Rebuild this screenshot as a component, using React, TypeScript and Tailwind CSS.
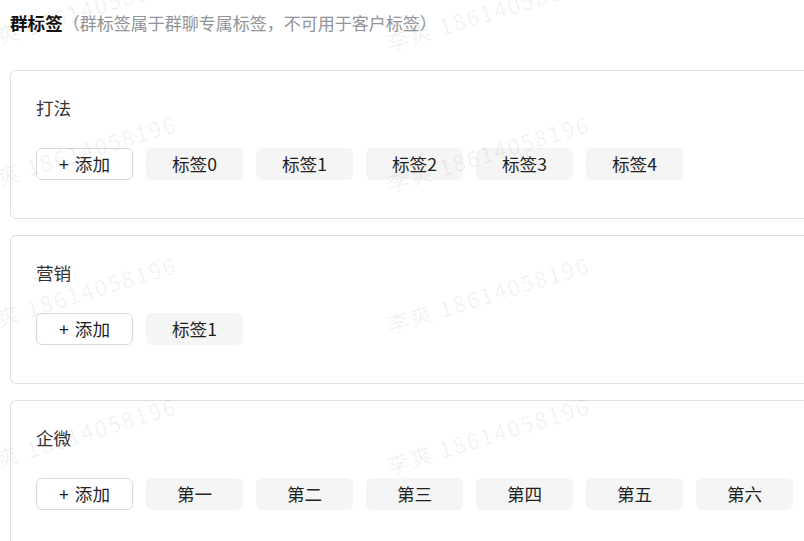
import React from "react";

const groups = [
  { name: "打法", tags: ["标签0", "标签1", "标签2", "标签3", "标签4"] },
  { name: "营销", tags: ["标签1"] },
  { name: "企微", tags: ["第一", "第二", "第三", "第四", "第五", "第六"] },
];

const marks: { left: number; top: number }[] = [];
for (let r = 0; r < 4; r++) {
  for (let c = 0; c < 2; c++) {
    marks.push({ left: -23 + 413 * c, top: 52 + 141 * r - 21 });
  }
}

export default function App() {
  return (
    <div
      className="relative h-[541px] w-[804px] overflow-hidden bg-white"
      style={{ fontFamily: '"Noto Sans CJK SC", "Noto Sans", sans-serif' }}
    >
      <div className="pl-[10px] pt-[10px]">
        <div className="flex h-[26px] items-baseline leading-[26px] whitespace-nowrap">
          <span className="text-[17.6px] font-bold text-[#111]">群标签</span>
          <span className="text-[17px] text-[#909399]">（群标签属于群聊专属标签，不可用于客户标签）</span>
        </div>
        <div className="mt-[34px] flex flex-col gap-[16px]">
          {groups.map((g) => (
            <div
              key={g.name}
              className="w-[830px] rounded-md border border-[#dcdfe6] pl-[25px] pt-[24px] pb-[38px]"
            >
              <div className="h-[26px] text-[17.6px] leading-[26px] text-[#333]">{g.name}</div>
              <div className="mt-[27px] flex gap-[13px]">
                <div className="flex h-[32px] w-[97px] items-center justify-center gap-[6px] rounded-[6px] border border-[#d9d9d9] bg-white text-[17.6px] text-[#1f1f1f]">
                  <span>+</span>
                  <span>添加</span>
                </div>
                {g.tags.map((t) => (
                  <div
                    key={t}
                    className="flex h-[32px] w-[97px] items-center justify-center rounded-[6px] bg-[#f5f5f5] text-[17.6px] text-[#1f1f1f]"
                  >
                    {t}
                  </div>
                ))}
              </div>
            </div>
          ))}
        </div>
      </div>
      <div className="pointer-events-none absolute inset-0">
        {marks.map((m, i) => (
          <span
            key={i}
            className="absolute origin-bottom-left -rotate-[17deg] whitespace-nowrap text-[22px] leading-[22px] tracking-[2px] text-[rgba(0,0,0,0.06)]"
            style={{ left: m.left, top: m.top }}
          >
            李爽 18614058196
          </span>
        ))}
      </div>
    </div>
  );
}
